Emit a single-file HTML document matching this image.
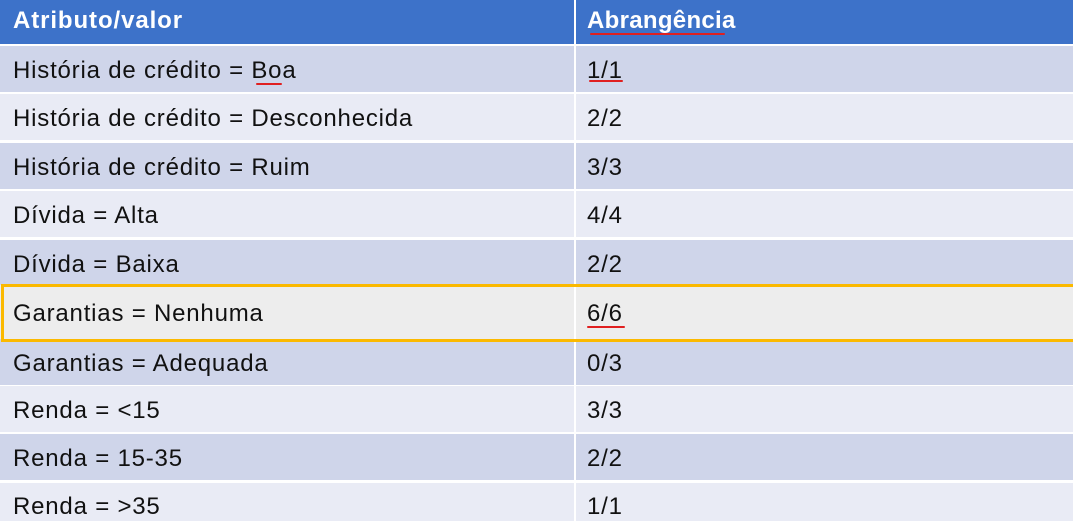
<!DOCTYPE html>
<html><head><meta charset="utf-8"><style>
body{margin:0;width:1073px;height:521px;overflow:hidden;background:#fff;font-family:"Liberation Sans",sans-serif;position:relative}
.r{position:absolute;left:0;width:1073px;height:46px;font-size:24px;letter-spacing:0.8px;color:#111}
.r span{position:absolute;top:calc(50% + 2px);transform:translateY(-50%);white-space:nowrap}
.a{left:13px}.b{left:587px}
.o{background:#cfd5ea}.e{background:#e9ebf5}
.v{position:absolute;left:574px;top:0;width:2px;height:521px;background:#fff}
.h{top:0;height:44px;background:#3d72c9;color:#fff;font-weight:bold;letter-spacing:0.3px}
.h span{top:calc(50% - 1px)}
.ul{position:absolute;height:2px;background:#e02020;border-radius:2px}
</style></head><body>
<div class="r h"><span class="a" style="letter-spacing:0.9px">Atributo/valor</span><span class="b">Abrangência</span></div>
<div class="r o" style="top:46px"><span class="a">História de crédito = Boa</span><span class="b">1/1</span></div>
<div class="r e" style="top:94px"><span class="a">História de crédito = Desconhecida</span><span class="b">2/2</span></div>
<div class="r o" style="top:143px"><span class="a">História de crédito = Ruim</span><span class="b">3/3</span></div>
<div class="r e" style="top:191px"><span class="a">Dívida = Alta</span><span class="b">4/4</span></div>
<div class="r o" style="top:240px"><span class="a">Dívida = Baixa</span><span class="b">2/2</span></div>
<div class="r" style="top:285px;height:54px;background:#ededed"><span class="a">Garantias = Nenhuma</span><span class="b">6/6</span></div>
<div class="r o" style="top:339px;height:46px"><span class="a">Garantias = Adequada</span><span class="b">0/3</span></div>
<div class="r e" style="top:386px"><span class="a">Renda = &lt;15</span><span class="b">3/3</span></div>
<div class="r o" style="top:434px"><span class="a">Renda = 15-35</span><span class="b">2/2</span></div>
<div class="r e" style="top:483px;height:38px"><span class="a" style="top:24px">Renda = &gt;35</span><span class="b" style="top:24px">1/1</span></div>
<div class="v"></div>
<div style="position:absolute;left:1px;top:284px;width:1072px;height:52px;border:3px solid #fbb900;border-right:none;box-sizing:content-box"></div>
<div class="ul" style="left:590px;top:33px;width:135px"></div>
<div class="ul" style="left:256px;top:83px;width:26px"></div>
<div class="ul" style="left:589px;top:80px;width:34px"></div>
<div class="ul" style="left:587px;top:326px;width:38px"></div>
</body></html>
